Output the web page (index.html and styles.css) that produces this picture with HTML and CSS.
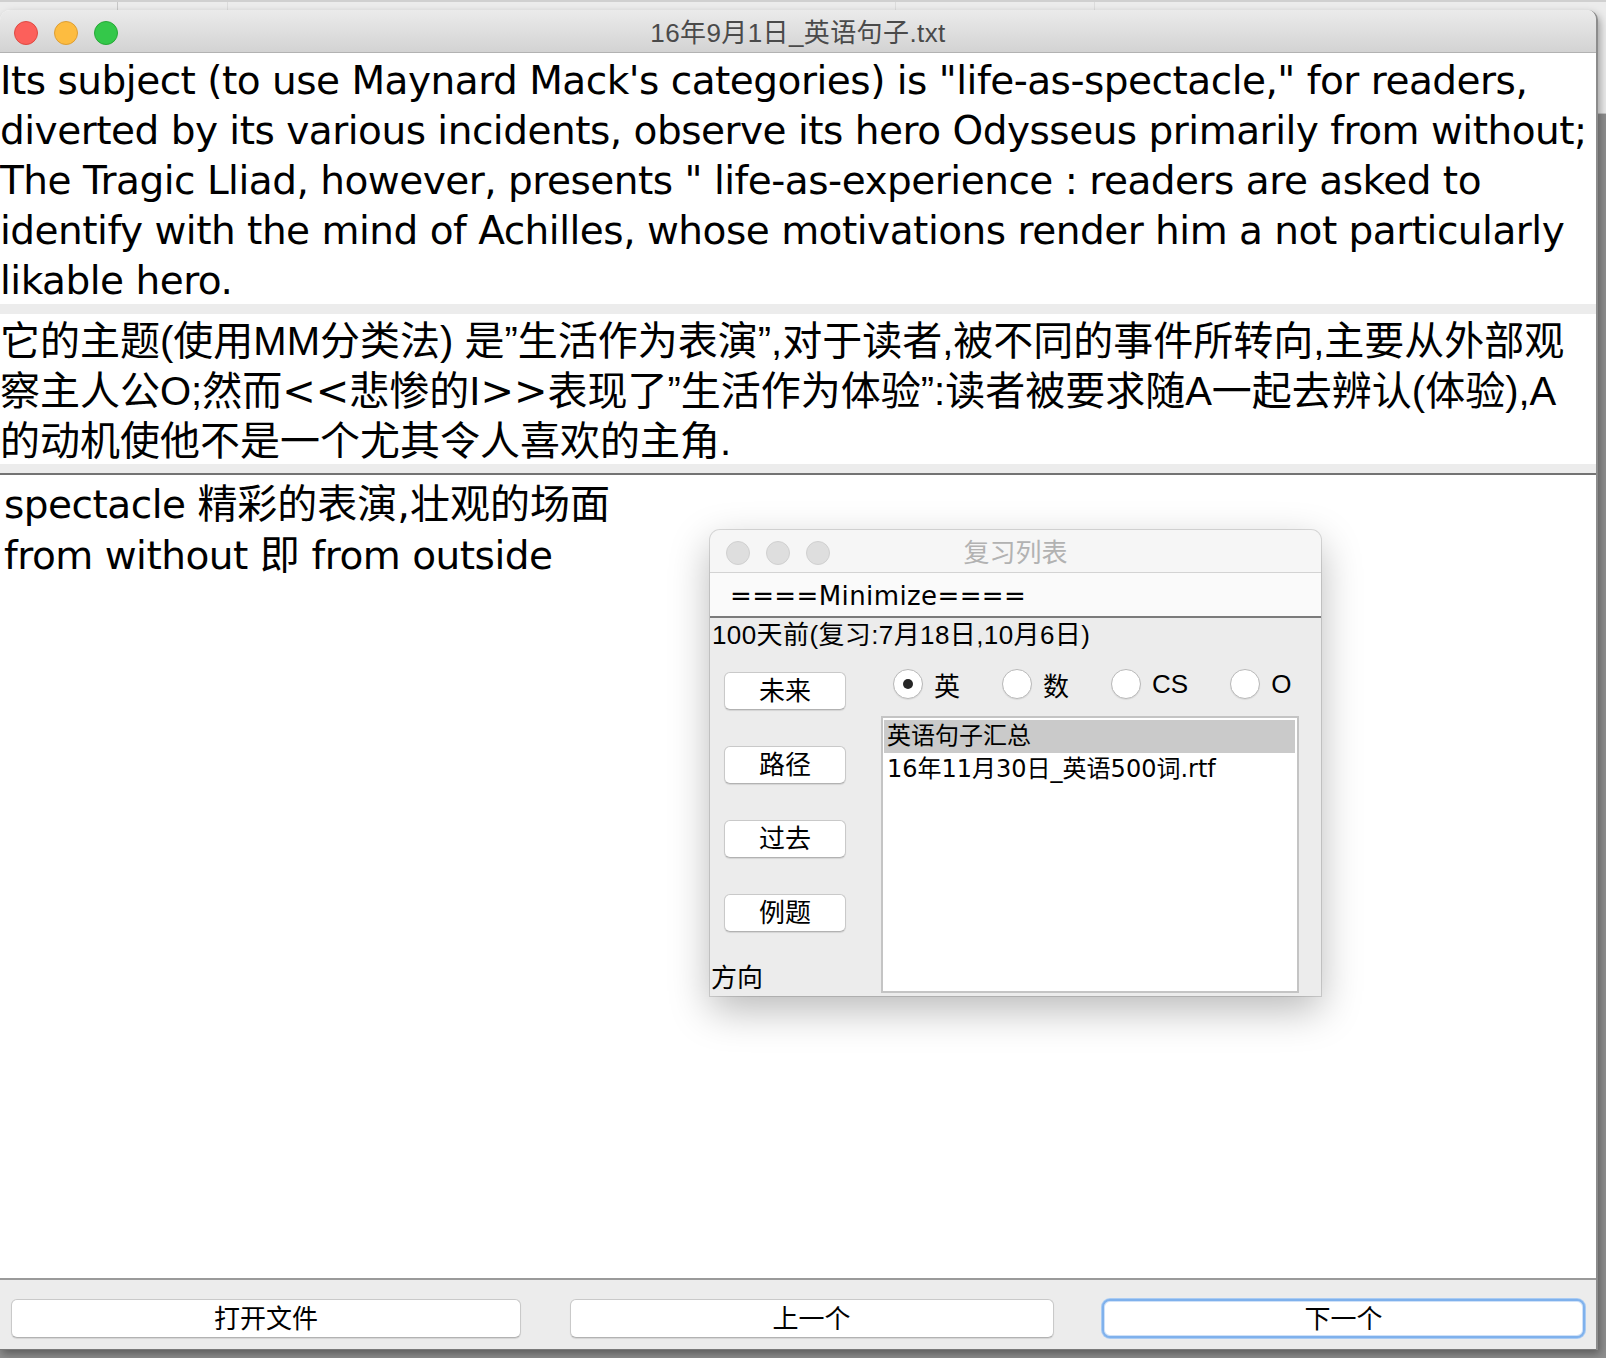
FILE: index.html
```html
<!DOCTYPE html>
<html lang="zh-CN">
<head>
<meta charset="utf-8">
<title>16年9月1日_英语句子.txt</title>
<link rel="stylesheet" href="styles.css">
</head>
<body>
<div class="desktop">
  <div class="backwin">
    <span class="bw-v v1"></span><span class="bw-v v2"></span><span class="bw-v v3"></span><span class="bw-v v4"></span>
  </div>

  <div class="window main">
    <div class="titlebar">
      <div class="lights">
        <span class="light red"></span><span class="light yellow"></span><span class="light green"></span>
      </div>
      <div class="title">16年9月1日_英语句子.txt</div>
    </div>

    <div class="upper">
      <div class="text en">
        <div class="ln">Its subject (to use Maynard Mack's categories) is "life-as-spectacle," for readers,</div>
        <div class="ln">diverted by its various incidents, observe its hero Odysseus primarily from without;</div>
        <div class="ln">The Tragic Lliad, however, presents " life-as-experience : readers are asked to</div>
        <div class="ln">identify with the mind of Achilles, whose motivations render him a not particularly</div>
        <div class="ln">likable hero.</div>
      </div>
      <div class="band"></div>
      <div class="text zh">
        <div class="ln">它的主题(使用MM分类法) 是”生活作为表演”,对于读者,被不同的事件所转向,主要从外部观</div>
        <div class="ln">察主人公O;然而<span class="angle">&lt;&lt;</span>悲惨的I<span class="angle">&gt;&gt;</span>表现了”生活作为体验”:读者被要求随A一起去辨认(体验),A</div>
        <div class="ln">的动机使他不是一个尤其令人喜欢的主角.</div>
      </div>
      <div class="band last"></div>
    </div>

    <div class="notes">
      <div class="ln">spectacle <span class="cj">精彩的表演,壮观的场面</span></div>
      <div class="ln">from without <span class="cj">即</span> from outside</div>
    </div>

    <div class="buttonbar">
      <button class="btn">打开文件</button>
      <button class="btn">上一个</button>
      <button class="btn focus">下一个</button>
    </div>
  </div>

  <div class="window dialog">
    <div class="dlg-title">
      <div class="lights small">
        <span class="light off"></span><span class="light off"></span><span class="light off"></span>
      </div>
      <div class="title">复习列表</div>
    </div>
    <div class="minimize">====Minimize====</div>
    <div class="status">100天前(复习:7月18日,10月6日)</div>
    <div class="dlg-main">
      <div class="dlg-left">
        <button class="btn dbtn">未来</button>
        <button class="btn dbtn">路径</button>
        <button class="btn dbtn">过去</button>
        <button class="btn dbtn">例题</button>
        <div class="dir">方向</div>
      </div>
      <div class="dlg-right">
        <div class="radios">
          <label class="radio on"><span class="dot"></span><span>英</span></label>
          <label class="radio"><span class="dot"></span><span>数</span></label>
          <label class="radio"><span class="dot"></span><span>CS</span></label>
          <label class="radio"><span class="dot"></span><span>O</span></label>
        </div>
        <div class="list">
          <div class="row sel">英语句子汇总</div>
          <div class="row">16年11月30日_英语500词.rtf</div>
        </div>
      </div>
    </div>
  </div>
</div>
</body>
</html>
```

FILE: styles.css
```css
* { box-sizing: border-box; }
html, body { margin: 0; padding: 0; }
body {
  width: 1606px;
  height: 1358px;
  overflow: hidden;
  font-family: "Liberation Sans", "Noto Sans CJK SC", sans-serif;
  color: #000;
}
.desktop {
  position: relative;
  width: 1606px;
  height: 1358px;
  background: #8f8f8f;
}
.backwin {
  position: absolute;
  left: 0;
  top: 0;
  width: 1606px;
  height: 114px;
  background: #ececec;
  border-top: 2px solid #d0d0d0;
  border-bottom: 1px solid #c4c4c4;
}
.bw-v { position: absolute; top: 0; width: 1px; height: 12px; background: #c8c8c8; }
.v1 { left: 117px; }
.v2 { left: 227px; background: #dcdcdc; }
.v3 { left: 895px; background: #dcdcdc; }
.v4 { left: 1094px; background: #dcdcdc; }

.window { position: absolute; }

.main {
  left: 0;
  top: 10px;
  width: 1598px;
  height: 1340px;
  display: flex;
  flex-direction: column;
  background: #fff;
  border-radius: 10px 10px 0 0;
  border-right: 2px solid #8c8c8c;
  overflow: hidden;
  box-shadow: 2px 4px 8px rgba(0, 0, 0, 0.35);
}
.titlebar {
  flex: none;
  height: 43px;
  padding-top: 3px;
  display: grid;
  grid-template-columns: 1fr auto 1fr;
  align-items: center;
  background: linear-gradient(#ebebeb, #d3d3d3);
  border-bottom: 1px solid #b2b2b2;
}
.lights { display: flex; gap: 16px; padding-left: 14px; }
.light {
  width: 24px;
  height: 24px;
  border-radius: 50%;
  display: block;
}
.red { background: #fc605b; border: 1px solid #de4a42; }
.yellow { background: #fdbc40; border: 1px solid #dd9e33; }
.green { background: #34c84a; border: 1px solid #27a837; }
.off { background: #dedede; border: 1px solid #d0d0d0; }
.lights.small { padding-left: 16px; }

.title {
  font-family: "Liberation Sans", "Noto Sans CJK SC", sans-serif;
  font-size: 26px;
  line-height: 30px;
  letter-spacing: 0.4px;
  color: #4a4a4a;
  white-space: nowrap;
}

.upper { flex: none; }
.text {
  line-height: 50px;
  white-space: nowrap;
  background: #fff;
}
.text.en {
  font-family: "DejaVu Sans", sans-serif;
  font-size: 39px;
  letter-spacing: -0.5px;
  height: 251px;
  padding-top: 3px;
}
.text.zh {
  font-family: "Liberation Sans", "Noto Sans CJK SC", sans-serif;
  font-size: 40px;
  height: 150px;
  padding-top: 2px;
}
.angle { font-family: "DejaVu Sans", sans-serif; }
.band { position: relative; height: 10px; background: #ececec; }
.band.last { height: 11px; border-bottom: 2px solid #737373; }

.notes {
  flex: 1;
  padding: 4px 0 0 4px;
  font-family: "DejaVu Sans", "Noto Sans CJK SC", sans-serif;
  font-size: 39px;
  letter-spacing: -0.5px;
  line-height: 50px;
  white-space: nowrap;
  border-bottom: 2px solid #9a9a9a;
}
.notes .cj { font-size: 40px; letter-spacing: 0; }

.buttonbar {
  flex: none;
  height: 70px;
  background: #ececec;
  border-bottom: 1px solid #7a7a7a;
  display: grid;
  grid-template-columns: 510px 484px 483px;
  column-gap: 48.5px;
  padding: 19px 0 0 11px;
  align-items: start;
}
.btn {
  font-family: "Liberation Sans", "Noto Sans CJK SC", sans-serif;
  font-size: 26px;
  line-height: 30px;
  color: #000;
  background: #fff;
  border: 1px solid #c9c9c9;
  border-bottom-color: #b2b2b2;
  border-radius: 6px;
  box-shadow: 0 1px 1px rgba(0, 0, 0, 0.1);
  padding: 0;
  height: 39px;
}
.btn.focus {
  border: 2px solid #7fb1ec;
  box-shadow: 0 0 0 1px #a9cbf3, inset 0 0 0 1px #cfe1f8;
  border-radius: 8px;
}

.dialog {
  left: 710px;
  top: 530px;
  width: 611px;
  height: 466px;
  background: #ececec;
  border-radius: 10px 10px 0 0;
  display: flex;
  flex-direction: column;
  overflow: hidden;
  box-shadow: 0 0 0 1px rgba(0, 0, 0, 0.13), 0 14px 40px rgba(0, 0, 0, 0.28);
}
.dlg-title {
  flex: none;
  height: 43px;
  padding-top: 3px;
  display: grid;
  grid-template-columns: 1fr auto 1fr;
  align-items: center;
  background: #f6f6f6;
  border-bottom: 1px solid #d3d3d3;
}
.dlg-title .title { color: #b2b2b2; letter-spacing: 0; }
.minimize {
  flex: none;
  height: 45px;
  background: #fafafa;
  border-bottom: 2px solid #7b7b7b;
  padding: 4px 0 0 20px;
  font-family: "DejaVu Sans", sans-serif;
  font-size: 26px;
  letter-spacing: 0.4px;
  line-height: 39px;
  white-space: nowrap;
}
.status {
  flex: none;
  height: 37px;
  padding: 0 0 3px 2px;
  font-size: 26px;
  letter-spacing: 0.4px;
  line-height: 34px;
  white-space: nowrap;
}
.dlg-main { flex: 1; display: flex; }
.dlg-left {
  width: 171px;
  display: flex;
  flex-direction: column;
  align-items: flex-start;
  padding-top: 17px;
}
.dbtn { margin-left: 14px; width: 122px; height: 38px; margin-bottom: 36px; }
.dbtn:nth-of-type(4) { margin-bottom: 0; }
.dir {
  margin-top: auto;
  height: 36px;
  line-height: 36px;
  padding-left: 1px;
  font-size: 26px;
}
.dlg-right { width: 418px; display: flex; flex-direction: column; }
.radios {
  height: 58px;
  display: flex;
  align-items: center;
  gap: 42px;
  padding-left: 12px;
  font-size: 26px;
}
.radio { display: flex; align-items: center; gap: 11px; }
.dot {
  position: relative;
  width: 30px;
  height: 30px;
  border-radius: 50%;
  background: #fff;
  border: 1px solid #b9b9b9;
  box-shadow: 0 1px 1px rgba(0, 0, 0, 0.08);
}
.radio.on .dot::after {
  content: "";
  position: absolute;
  left: 9px;
  top: 9px;
  width: 10px;
  height: 10px;
  border-radius: 50%;
  background: #262626;
}
.list {
  height: 277px;
  margin-top: 3px;
  background: #fff;
  border: 2px solid #c4c4c4;
  padding: 2px 2px 2px 1px;
  font-family: "DejaVu Sans", "Noto Sans CJK SC", sans-serif;
  font-size: 24px;
}
.row { height: 33px; line-height: 33px; padding-left: 3px; white-space: nowrap; }
.row.sel { background: #cacaca; }
```
